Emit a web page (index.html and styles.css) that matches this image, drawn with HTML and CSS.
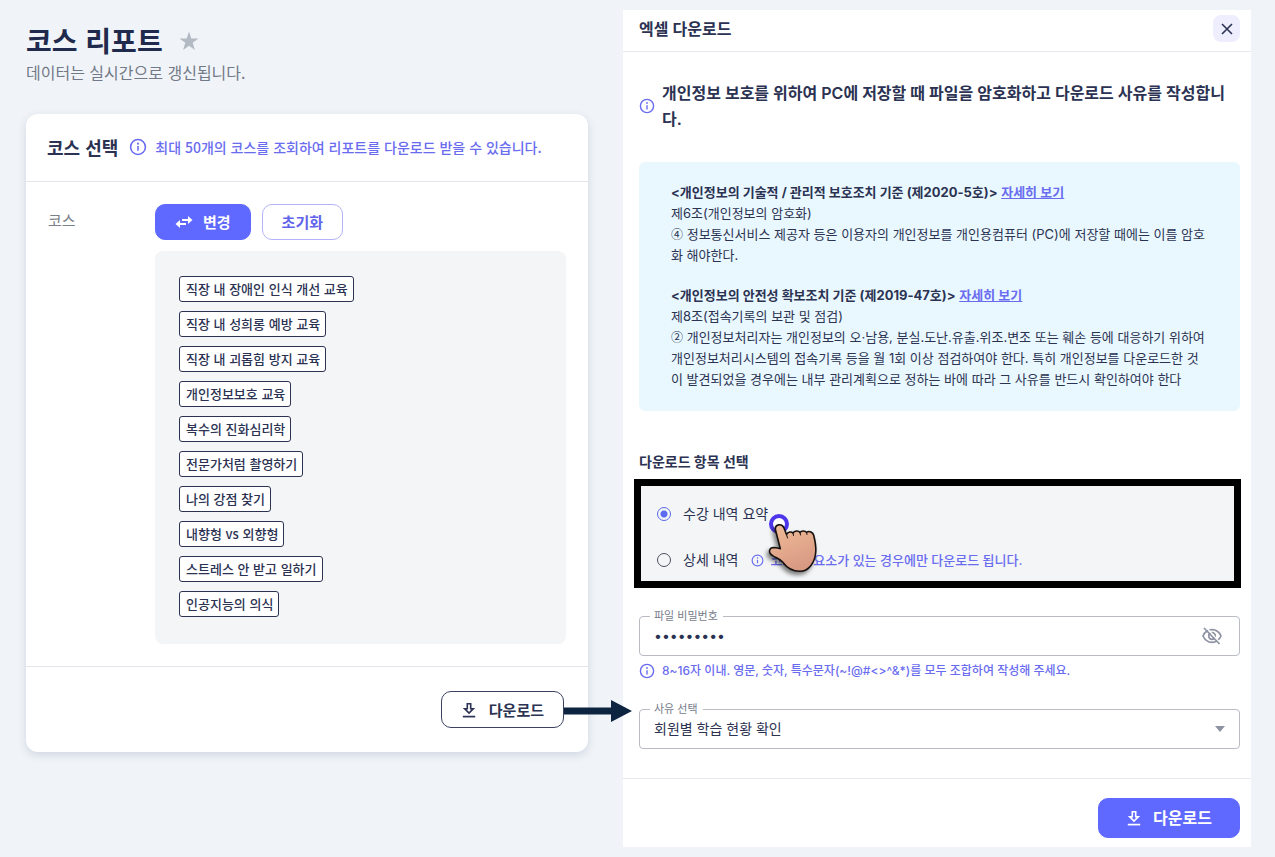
FILE: index.html
```
<!DOCTYPE html>
<html lang="ko">
<head>
  <meta charset="UTF-8" />
  <meta name="viewport" content="width=device-width, initial-scale=1.0"/>
  <title>코스 리포트</title>
  <link rel="stylesheet" href="styles.css">
</head>
<body>

<svg class="sprite" width="0" height="0" aria-hidden="true">
  <symbol id="icon-info" viewBox="0 0 16 16">
    <circle cx="8" cy="8" r="6.6" fill="none" stroke="currentColor" stroke-width="1.4"/>
    <path d="M8 7.2v4.2" stroke="currentColor" stroke-width="1.4"/>
    <circle cx="8" cy="5" r="0.9" fill="currentColor"/>
  </symbol>
  <symbol id="icon-download" viewBox="0 0 16 16">
    <path d="M6.3 1.7h3.4v5h2.6L8 11 3.7 6.7h2.6z" fill="none" stroke="currentColor" stroke-width="1.6"/>
    <path d="M1.8 14.6h12.4" stroke="currentColor" stroke-width="1.7"/>
  </symbol>
</svg>

<div class="page">
  <main class="report">
    <div class="title-row">
      <h1>코스 리포트</h1>
      <button class="star-button" type="button" aria-label="즐겨찾기">
        <svg width="20" height="20" viewBox="0 0 20 20"><path d="M10 .5l2.3 6.9h7.2l-5.8 4.3 2.2 7.3-5.9-4.3L4.1 19l2.2-7.3L.5 7.4h7.2z" fill="#b4bac4"/></svg>
      </button>
    </div>
    <p class="subtitle">데이터는 실시간으로 갱신됩니다.</p>

    <section class="card">
      <div class="card-header">
        <h2>코스 선택</h2>
        <svg class="info-icon" width="18" height="18"><use href="#icon-info"/></svg>
        <p class="card-note">최대 50개의 코스를 조회하여 리포트를 다운로드 받을 수 있습니다.</p>
      </div>
      <div class="card-body">
        <span class="row-label">코스</span>
        <div class="row-content">
          <div class="button-row">
            <button class="btn btn-primary" type="button">
              <svg width="18" height="14" viewBox="0 0 18 14"><path d="M7 4h6V1l4.5 4L13 9V6H7zM11 10H5v3L.5 9 5 5v3h6z" fill="#fff"/></svg>
              변경
            </button>
            <button class="btn btn-outline" type="button">초기화</button>
          </div>
          <ul class="course-list">
            <li>직장 내 장애인 인식 개선 교육</li>
            <li>직장 내 성희롱 예방 교육</li>
            <li>직장 내 괴롭힘 방지 교육</li>
            <li>개인정보보호 교육</li>
            <li>복수의 진화심리학</li>
            <li>전문가처럼 촬영하기</li>
            <li>나의 강점 찾기</li>
            <li>내향형 vs 외향형</li>
            <li>스트레스 안 받고 일하기</li>
            <li>인공지능의 의식</li>
          </ul>
        </div>
      </div>
      <div class="card-footer">
        <div class="arrow-anchor">
          <button class="btn btn-dark" type="button">
            <svg width="16" height="16"><use href="#icon-download"/></svg>
            다운로드
          </button>
          <svg class="arrow" width="68" height="22" viewBox="0 0 68 22"><path d="M0 7.5h47V0l21 11-21 11v-7.5H0z" fill="#0d2440"/></svg>
        </div>
      </div>
    </section>
  </main>

  <section class="modal" role="dialog" aria-labelledby="modal-title">
    <div class="modal-header">
      <h2 id="modal-title">엑셀 다운로드</h2>
      <button class="close-button" type="button" aria-label="닫기">
        <svg width="12" height="12" viewBox="0 0 12 12"><path d="M1 1l10 10M11 1L1 11" stroke="#2b3252" stroke-width="1.6"/></svg>
      </button>
    </div>

    <div class="modal-body">
      <div class="headline">
        <svg class="info-icon" width="16" height="16"><use href="#icon-info"/></svg>
        <p>개인정보 보호를 위하여 PC에 저장할 때 파일을 암호화하고 다운로드 사유를 작성합니다.</p>
      </div>

      <div class="law-box">
        <div>
          <p><strong>&lt;개인정보의 기술적 / 관리적 보호조치 기준 (제2020-5호)&gt;</strong> <a href="#">자세히 보기</a></p>
          <p>제6조(개인정보의 암호화)</p>
          <p><span class="marker">④</span> 정보통신서비스 제공자 등은 이용자의 개인정보를 개인용컴퓨터 (PC)에 저장할 때에는 이를 암호화 해야한다.</p>
        </div>
        <div>
          <p><strong>&lt;개인정보의 안전성 확보조치 기준 (제2019-47호)&gt;</strong> <a href="#">자세히 보기</a></p>
          <p>제8조(접속기록의 보관 및 점검)</p>
          <p><span class="marker">②</span> 개인정보처리자는 개인정보의 오·남용, 분실.도난.유출.위조.변조 또는 훼손 등에 대응하기 위하여 개인정보처리시스템의 접속기록 등을 월 1회 이상 점검하여야 한다. 특히 개인정보를 다운로드한 것이 발견되었을 경우에는 내부 관리계획으로 정하는 바에 따라 그 사유를 반드시 확인하여야 한다</p>
        </div>
      </div>

      <h3 id="items-title">다운로드 항목 선택</h3>
      <div class="radio-box" role="radiogroup" aria-labelledby="items-title">
        <div class="radio-row">
          <input type="radio" name="item" id="item-summary" checked>
          <label for="item-summary">수강 내역 요약</label>
          <svg class="pointer" width="60" height="68" viewBox="0 0 60 68">
            <defs>
              <linearGradient id="skin" x1="0" y1="0" x2="0.4" y2="1">
                <stop offset="0" stop-color="#f0bd98"/>
                <stop offset="1" stop-color="#d99a84"/>
              </linearGradient>
            </defs>
            <circle cx="17" cy="14" r="8" fill="#fff" stroke="#4d36ea" stroke-width="4"/>
            <path class="hand" d="M13.5 20c-1-6 6.5-7 8.5-2l2.5 6.5c1.500-3 5-3 6.500-1.500 1.500-2.500 5.500-2.500 7-.5 1.500-2 5-2 6.500-.2 3-2 6.500 0 7.200 3 1.500 6 2.300 11 2.100 16-.5 11-7 20-16 20-8 0-13-3.500-17-9-3-4-7-4.500-10-6.500-5-3-4-8 1-8.300 3 0 4.500.8 6.500 1.300z" fill="url(#skin)" stroke="#16110f" stroke-width="1.6" stroke-linejoin="round"/>
            <path d="M24.5 24.5l1 3.500M31 23l.5 2.500M38 22.500l.5 2.500M44.500 22.300l.5 2.200" stroke="#16110f" stroke-width="1" stroke-linecap="round"/>
          </svg>
        </div>
        <div class="radio-row">
          <input type="radio" name="item" id="item-detail">
          <label for="item-detail">상세 내역</label>
          <svg class="info-icon" width="13" height="13"><use href="#icon-info"/></svg>
          <span class="radio-note">코스 내 요소가 있는 경우에만 다운로드 됩니다.</span>
        </div>
      </div>

      <fieldset class="field">
        <legend><label for="password">파일 비밀번호</label></legend>
        <input type="password" id="password" value="abcd1234!">
        <button class="eye-button" type="button" aria-label="비밀번호 보기">
          <svg width="20" height="18" viewBox="0 0 20 18">
            <path d="M1 9c2-4.5 5.3-6.3 9-6.3S17 4.500 19 9c-2 4.5-5.3 6.3-9 6.3S3 13.500 1 9z" fill="none" stroke="#8d93a2" stroke-width="1.7"/>
            <circle cx="10" cy="9" r="3.3" fill="none" stroke="#8d93a2" stroke-width="1.7"/>
            <path d="M4 0l14 16" stroke="#fff" stroke-width="1.5"/>
            <path d="M2 1l15.5 16" stroke="#8d93a2" stroke-width="1.7"/>
          </svg>
        </button>
      </fieldset>
      <div class="helper">
        <svg class="info-icon" width="16" height="16"><use href="#icon-info"/></svg>
        <p>8~16자 이내. 영문, 숫자, 특수문자(~!@#&lt;&gt;^&amp;*)를 모두 조합하여 작성해 주세요.</p>
      </div>

      <fieldset class="field">
        <legend><label for="reason">사유 선택</label></legend>
        <select id="reason">
          <option>회원별 학습 현황 확인</option>
        </select>
        <svg class="caret" width="10" height="6" viewBox="0 0 10 6"><path d="M0 0h10L5 6z" fill="#8d93a2"/></svg>
      </fieldset>
    </div>

    <div class="modal-footer">
      <button class="btn btn-primary btn-large" type="button">
        <svg width="16" height="16"><use href="#icon-download"/></svg>
        다운로드
      </button>
    </div>
  </section>
</div>

</body>
</html>
```
FILE: styles.css
```
* {
  box-sizing: border-box;
}
body {
  margin: 0;
  font-family: "Noto Sans CJK KR", sans-serif;
  font-size: 14px;
  color: #2b3252;
  background-color: #f0f4f8;
}
h1, h2, h3, p, ul {
  margin: 0;
  padding: 0;
}
button, input, select {
  font-family: inherit;
  color: inherit;
}
button {
  cursor: pointer;
}
svg {
  flex: none;
}
.sprite {
  position: absolute;
}
.page {
  display: grid;
  grid-template-columns: 562fr 628fr;
  gap: 35px;
  align-items: start;
  padding: 10px 24px 10px 26px;
}

/* report */
.report {
  padding-top: 11px;
}
.title-row {
  display: flex;
  align-items: center;
  gap: 16px;
}
h1 {
  font-size: 28px;
  line-height: 38px;
  color: #1f2a4d;
}
.star-button {
  display: flex;
  padding: 2px 0 0;
  border: none;
  background: none;
}
.subtitle {
  font-size: 16px;
  line-height: 26px;
  color: #727987;
}
.card {
  margin-top: 29px;
  background-color: white;
  border-radius: 12px;
  box-shadow: 0 3px 8px rgba(50, 60, 110, 0.16);
}
.card-header {
  display: flex;
  align-items: center;
  height: 68px;
  padding: 0 21px 2px;
  border-bottom: 1px solid #e3e5ea;
}
.card-header h2 {
  font-size: 18px;
  line-height: 26px;
}
.card-header .info-icon {
  margin: 0 8px 0 11px;
}
.info-icon {
  color: #6a6cf0;
}
.card-note {
  color: #6a6cf0;
  font-weight: 500;
  line-height: 20px;
}
.card-body {
  display: grid;
  grid-template-columns: 107px 1fr;
  padding: 22px;
}
.row-label {
  font-size: 15px;
  line-height: 32px;
  color: #7b7f88;
}
.button-row {
  display: flex;
  gap: 11px;
}
.btn {
  display: flex;
  align-items: center;
  justify-content: center;
  gap: 10px;
  height: 36px;
  padding: 0 19px;
  border: 1px solid #5f68ff;
  border-radius: 10px;
  background-color: white;
  font-size: 15px;
  font-weight: bold;
  line-height: 20px;
}
.btn-primary {
  background-color: #5f68ff;
  color: white;
}
.btn-outline {
  border-color: #b3b4f7;
  color: #6163ea;
}
.btn-dark {
  gap: 12px;
  height: 37px;
  border-color: #3a4260;
}
.course-list {
  display: flex;
  flex-direction: column;
  align-items: flex-start;
  gap: 9px;
  margin-top: 11px;
  padding: 25px 24px 27px;
  list-style: none;
  border-radius: 8px;
  background-color: #f3f5f6;
}
.course-list li {
  padding: 0 5px 0 6px;
  border: 1px solid #2b3252;
  border-radius: 3px;
  background-color: white;
  font-size: 13px;
  font-weight: 500;
  line-height: 24px;
}
.card-footer {
  display: flex;
  justify-content: flex-end;
  padding: 24px;
  border-top: 1px solid #e3e5ea;
}
.arrow-anchor {
  position: relative;
}
.arrow {
  position: absolute;
  left: 100%;
  top: 9px;
}

/* download dialog */
.modal {
  font-family: Inter, "Noto Sans CJK KR", sans-serif;
  background-color: white;
}
.modal-header {
  display: flex;
  align-items: center;
  justify-content: space-between;
  height: 42px;
  padding: 0 11px 4px 16px;
  border-bottom: 1px solid #e6e8ed;
}
.modal-header h2 {
  font-size: 16px;
  font-weight: 600;
  line-height: 24px;
}
.close-button {
  display: flex;
  align-items: center;
  justify-content: center;
  width: 27px;
  height: 27px;
  padding: 0;
  border: none;
  border-radius: 8px;
  background-color: #eeeefe;
}
.modal-body {
  padding: 28px 11px 29px 16px;
}
.headline {
  display: flex;
  align-items: center;
  gap: 7px;
  font-size: 16px;
  font-weight: 600;
  line-height: 26px;
  word-break: break-all;
}
.law-box {
  display: flex;
  flex-direction: column;
  gap: 19px;
  margin-top: 30px;
  padding: 20px 32px 21px;
  border-radius: 6px;
  background-color: #e9f8ff;
  font-size: 13px;
  line-height: 21px;
  word-break: break-all;
}
.law-box a {
  color: #6a6cf0;
  font-weight: 600;
}
.marker {
  display: inline-block;
  font-family: "Noto Sans CJK KR", sans-serif;
  font-size: 12px;
  line-height: 12px;
}
h3 {
  margin-top: 40px;
  font-size: 14px;
  line-height: 22px;
}
.radio-box {
  display: flex;
  flex-direction: column;
  gap: 22px;
  margin: 6px -1px 0 -5px;
  padding: 16px 16px 9px;
  border: 7px solid black;
  background-color: #f3f5f6;
}
.radio-row {
  position: relative;
  display: flex;
  align-items: center;
  line-height: 24px;
}
.radio-row input {
  appearance: none;
  width: 14px;
  height: 14px;
  margin: 0 12px 0 0;
  border: 1px solid #4a4f62;
  border-radius: 50%;
}
.radio-row input:checked {
  border-color: #5b6af0;
  background: radial-gradient(circle, #5b6af0 3px, transparent 4px);
}
.radio-row .info-icon {
  margin: 0 6px 0 13px;
}
.radio-note {
  color: #6a6cf0;
  font-size: 13px;
  font-weight: 500;
}
.pointer {
  position: absolute;
  left: 105px;
  top: 8px;
  z-index: 1;
}
.hand {
  filter: drop-shadow(-2px 3px 2px rgba(0, 0, 0, 0.5));
}
.field {
  display: flex;
  align-items: center;
  min-width: 0;
  height: 48px;
  margin: 20px 0 0;
  padding: 0 14px 8px 10px;
  border: 1px solid #babcc4;
  border-radius: 4px;
}
.field legend {
  padding: 0 5px 0 4px;
  font-size: 11px;
  line-height: 16px;
  color: #777c8a;
}
.field input,
.field select {
  flex: 1;
  min-width: 0;
  height: 28px;
  padding: 0 4px;
  border: none;
  outline: none;
  appearance: none;
  background: none;
  font-size: 14px;
}
.eye-button {
  display: flex;
  padding: 0;
  margin-right: 3px;
  border: none;
  background: none;
}
.helper {
  display: flex;
  align-items: center;
  gap: 7px;
  margin: 6px 0 21px;
  color: #6a6cf0;
  font-size: 12px;
  font-weight: 500;
  line-height: 18px;
}
.helper + .field {
  margin-top: 0;
}
.modal-footer {
  display: flex;
  justify-content: flex-end;
  padding: 19px 11px 9px;
  border-top: 1px solid #e6e8ed;
}
.btn-large {
  gap: 11px;
  height: 40px;
  padding: 0 27px;
  font-size: 16px;
}
```
